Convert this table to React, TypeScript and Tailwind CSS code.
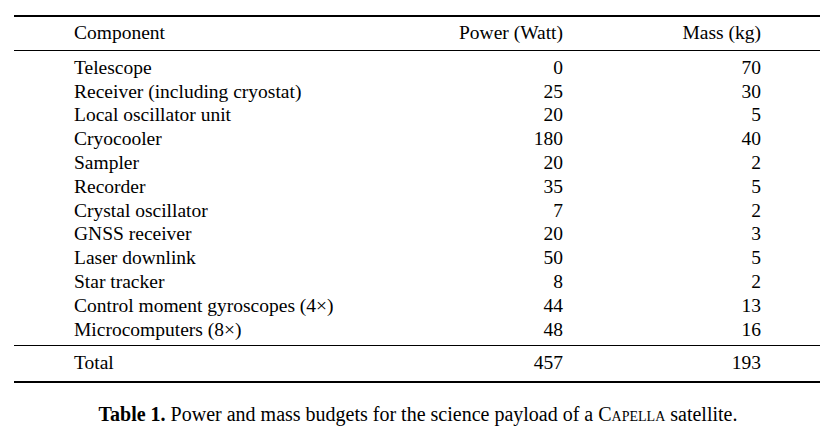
const rows: [string, string, string][] = [
  ["Telescope", "0", "70"],
  ["Receiver (including cryostat)", "25", "30"],
  ["Local oscillator unit", "20", "5"],
  ["Cryocooler", "180", "40"],
  ["Sampler", "20", "2"],
  ["Recorder", "35", "5"],
  ["Crystal oscillator", "7", "2"],
  ["GNSS receiver", "20", "3"],
  ["Laser downlink", "50", "5"],
  ["Star tracker", "8", "2"],
  ["Control moment gyroscopes (4×)", "44", "13"],
  ["Microcomputers (8×)", "48", "16"],
];

function Row({ cells }: { cells: [string, string, string] }) {
  return (
    <div className="grid grid-cols-[1fr_150px_198px] h-[23.8px] leading-[23.8px]">
      <div>{cells[0]}</div>
      <div className="text-right">{cells[1]}</div>
      <div className="text-right">{cells[2]}</div>
    </div>
  );
}

export default function App() {
  return (
    <div className="w-[836px] h-[437px] bg-white text-black font-['Liberation_Serif'] text-[19.5px] pt-[15px]">
      <div className="ml-[14px] w-[806px]">
        <div className="border-t-2 border-black" />
        <div className="pl-[60px] pr-[59px] pt-[4px] pb-[5px]">
          <Row cells={["Component", "Power (Watt)", "Mass (kg)"]} />
        </div>
        <div className="border-t border-black" />
        <div className="pl-[60px] pr-[59px] pt-[5px] pb-[4px]">
          {rows.map((r) => (
            <Row key={r[0]} cells={r} />
          ))}
        </div>
        <div className="border-t border-black" />
        <div className="pl-[60px] pr-[59px] pt-[5px] pb-[6px]">
          <Row cells={["Total", "457", "193"]} />
        </div>
        <div className="border-t-2 border-black" />
      </div>
      <p className="mt-[19px] text-center text-[20px] leading-[24px]">
        <span className="font-bold">Table 1.</span> Power and mass budgets for the science payload of a{" "}
        <span className="[font-variant-caps:small-caps]">Capella</span> satellite.
      </p>
    </div>
  );
}
